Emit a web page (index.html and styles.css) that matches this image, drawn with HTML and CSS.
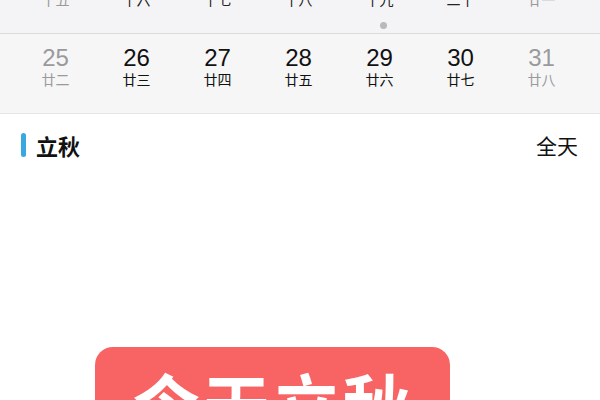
FILE: index.html
```html
<!DOCTYPE html>
<html lang="zh">
<head>
<meta charset="utf-8">
<link rel="stylesheet" href="styles.css">
</head>
<body>
<div class="week-prev">
  <div class="cols lunar-row">
    <span class="muted">十五</span>
    <span>十六</span>
    <span>十七</span>
    <span>十八</span>
    <span>十九</span>
    <span>二十</span>
    <span class="muted">廿一</span>
  </div>
  <div class="cols dot-row">
    <span></span><span></span><span></span><span></span>
    <span><i class="dot"></i></span>
    <span></span><span></span>
  </div>
</div>
<div class="week">
  <div class="cols">
    <div class="day muted"><b>25</b><small>廿二</small></div>
    <div class="day"><b>26</b><small>廿三</small></div>
    <div class="day"><b>27</b><small>廿四</small></div>
    <div class="day"><b>28</b><small>廿五</small></div>
    <div class="day"><b>29</b><small>廿六</small></div>
    <div class="day"><b>30</b><small>廿七</small></div>
    <div class="day muted"><b>31</b><small>廿八</small></div>
  </div>
</div>
<div class="event">
  <div class="event-title"><span class="bar"></span>立秋</div>
  <div class="event-time">全天</div>
</div>
<div class="banner-wrap">
  <div class="banner">今天立秋</div>
</div>
</body>
</html>
```
FILE: styles.css
```css
* { box-sizing: border-box; }
html, body { margin: 0; padding: 0; }
body {
  width: 600px;
  height: 400px;
  overflow: hidden;
  background: #ffffff;
  font-family: "Liberation Sans", "Noto Sans CJK SC", sans-serif;
  color: #111;
}
.cols {
  display: grid;
  grid-template-columns: repeat(7, 1fr);
  padding: 0 18px 0 15px;
  text-align: center;
}
.week-prev {
  height: 34px;
  background: #f4f4f6;
  border-bottom: 1px solid #dcdcde;
  overflow: hidden;
}
.lunar-row {
  margin-top: -9px;
  font-family: "Noto Sans CJK SC", sans-serif;
  font-size: 14px;
  line-height: 16px;
  color: #222;
}
.lunar-row .muted { color: #999; }
.dot-row { margin-top: 8px; height: 8px; }
.dot {
  display: inline-block;
  width: 7px;
  height: 7px;
  border-radius: 50%;
  background: #b9b9bb;
  margin-left: 7px;
}
.week {
  height: 80px;
  background: #f6f6f7;
  border-bottom: 1px solid #e6e6e8;
  padding-top: 11px;
}
.day {
  display: flex;
  flex-direction: column;
  align-items: center;
  color: #111;
}
.day b {
  font-family: "Liberation Sans", sans-serif;
  font-weight: 400;
  font-size: 24px;
  line-height: 26px;
}
.day small {
  font-family: "Noto Sans CJK SC", sans-serif;
  font-weight: 400;
  font-size: 14px;
  line-height: 16px;
  margin-top: 0;
}
.day.muted { color: #9a9a9c; }
.event {
  display: flex;
  justify-content: space-between;
  align-items: center;
  padding: 18px 22px 0 21px;
}
.event-title {
  display: flex;
  align-items: center;
  font-family: "Noto Sans CJK SC", sans-serif;
  font-weight: 700;
  font-size: 22px;
  line-height: 26px;
  color: #111;
}
.bar {
  display: inline-block;
  width: 5px;
  height: 24px;
  border-radius: 3px;
  background: #3aa8de;
  margin-right: 10px;
}
.event-time {
  font-family: "Noto Sans CJK SC", sans-serif;
  font-size: 21px;
  line-height: 26px;
  color: #111;
}
.banner-wrap {
  display: flex;
  padding: 189px 0 0 95px;
}
.banner {
  width: 355px;
  height: 90px;
  border-radius: 18px;
  background: #f86363;
  color: #fff;
  font-family: "Noto Sans CJK SC", sans-serif;
  font-weight: 700;
  font-size: 68px;
  line-height: 68px;
  padding-top: 22px;
  text-align: center;
  letter-spacing: 2px;
}
```
